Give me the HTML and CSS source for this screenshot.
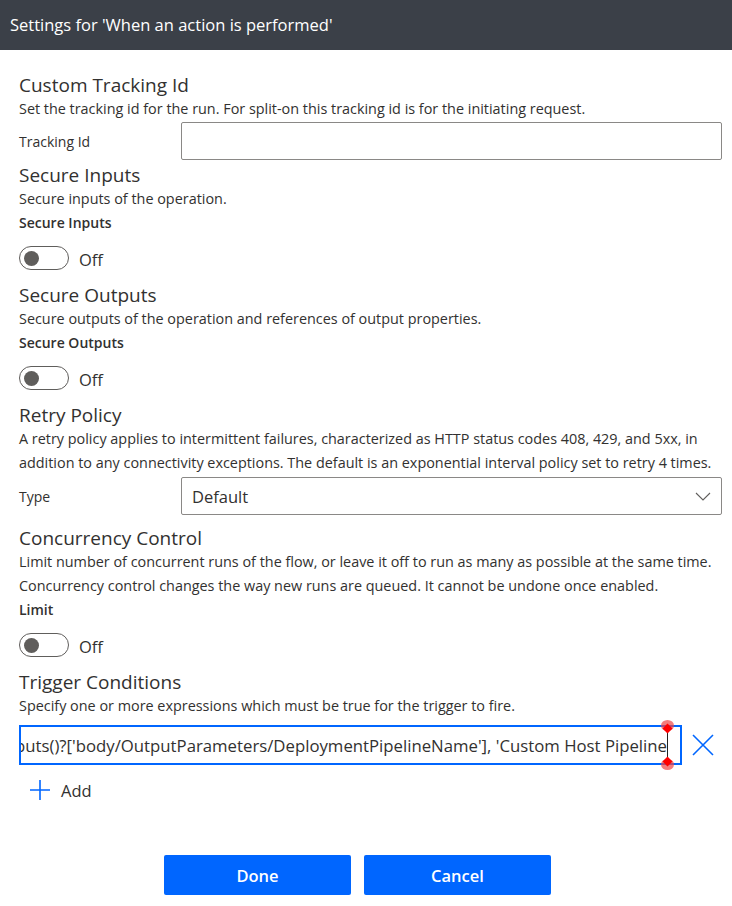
FILE: index.html
```html
<!DOCTYPE html>
<html lang="en">
<head>
  <meta charset="UTF-8">
  <meta name="viewport" content="width=device-width, initial-scale=1.0">
  <title>Settings</title>
  <link rel="stylesheet" href="styles.css">
</head>
<body>

  <div class="panel">

    <!-- Cabeçalho -->
    <div class="panel-header">Settings for 'When an action is performed'</div>

    <div class="panel-body">

      <div class="setting">
        <h2 class="setting-title">Custom Tracking Id</h2>
        <p class="setting-desc">Set the tracking id for the run. For split-on this tracking id is for the initiating request.</p>
        <div class="field-row field-row-tight">
          <label class="field-label" for="trackingId">Tracking Id</label>
          <input class="text-field" id="trackingId" type="text">
        </div>
      </div>

      <div class="setting">
        <h2 class="setting-title">Secure Inputs</h2>
        <p class="setting-desc">Secure inputs of the operation.</p>
        <div class="setting-label">Secure Inputs</div>
        <div class="toggle-row">
          <span class="toggle"><span class="toggle-knob"></span></span>
          <span class="toggle-text">Off</span>
        </div>
      </div>

      <div class="setting">
        <h2 class="setting-title">Secure Outputs</h2>
        <p class="setting-desc">Secure outputs of the operation and references of output properties.</p>
        <div class="setting-label">Secure Outputs</div>
        <div class="toggle-row">
          <span class="toggle"><span class="toggle-knob"></span></span>
          <span class="toggle-text">Off</span>
        </div>
      </div>

      <div class="setting">
        <h2 class="setting-title">Retry Policy</h2>
        <p class="setting-desc">A retry policy applies to intermittent failures, characterized as HTTP status codes 408, 429, and 5xx, in<br>addition to any connectivity exceptions. The default is an exponential interval policy set to retry 4 times.</p>
        <div class="field-row">
          <span class="field-label">Type</span>
          <div class="select-box">
            <span>Default</span>
            <svg width="16" height="9" viewBox="0 0 16 9"><path d="M1 1 L8 8 L15 1" fill="none" stroke="#605e5c" stroke-width="1.1"/></svg>
          </div>
        </div>
      </div>

      <div class="setting">
        <h2 class="setting-title">Concurrency Control</h2>
        <p class="setting-desc">Limit number of concurrent runs of the flow, or leave it off to run as many as possible at the same time.<br>Concurrency control changes the way new runs are queued. It cannot be undone once enabled.</p>
        <div class="setting-label">Limit</div>
        <div class="toggle-row">
          <span class="toggle"><span class="toggle-knob"></span></span>
          <span class="toggle-text">Off</span>
        </div>
      </div>

      <div class="setting">
        <h2 class="setting-title">Trigger Conditions</h2>
        <p class="setting-desc">Specify one or more expressions which must be true for the trigger to fire.</p>
        <div class="condition-row">
          <div class="condition-field">
            <div class="condition-clip">
              <span class="condition-text">@equals(triggerOutputs()?['body/OutputParameters/DeploymentPipelineName'], 'Custom Host Pipeline</span>
            </div>
            <span class="caret"></span>
            <span class="handle handle-top"></span>
            <span class="handle handle-bottom"></span>
          </div>
          <svg class="remove-icon" width="22" height="22" viewBox="0 0 22 22"><path d="M1 1 L21 21 M21 1 L1 21" stroke="#0066ff" stroke-width="1.6"/></svg>
        </div>
        <div class="add-row">
          <svg width="22" height="22" viewBox="0 0 22 22"><path d="M11 1 V21 M1 11 H21" stroke="#0066ff" stroke-width="1.6"/></svg>
          <span>Add</span>
        </div>
      </div>

    </div>

    <div class="panel-footer">
      <button class="btn">Done</button>
      <button class="btn">Cancel</button>
    </div>

  </div>

</body>
</html>
```

FILE: styles.css
```css
body {
  font-family: "Open Sans", Arial, sans-serif;
  background-color: #fff;
  color: #323130;
  margin: 0;
}
.panel {
  width: 732px;
}
.panel-header {
  height: 50px;
  background-color: #3b4048;
  color: #fff;
  font-size: 16.5px;
  line-height: 50px;
  padding-left: 10px;
}
.panel-body {
  padding: 23px 10px 0 19px;
}
.setting-title {
  margin: 0;
  font-size: 19px;
  font-weight: 400;
  line-height: 24px;
}
.setting-desc {
  margin: 0;
  font-size: 14.4px;
  line-height: 24px;
}
.setting-label {
  font-size: 14px;
  font-weight: 600;
  line-height: 24px;
}
/* Linha com rótulo e campo */
.field-row {
  display: flex;
  align-items: center;
  margin: 2px 0 11px;
}
.field-row-tight {
  margin: 1px 0 3px;
}
.field-label {
  width: 162px;
  font-size: 14px;
}
.text-field {
  flex: 1;
  height: 38px;
  box-sizing: border-box;
  border: 1px solid #8a8886;
  border-radius: 2px;
  margin: 0;
}
.select-box {
  flex: 1;
  height: 38px;
  box-sizing: border-box;
  border: 1px solid #8a8886;
  border-radius: 2px;
  display: flex;
  align-items: center;
  justify-content: space-between;
  padding: 0 10px 0 10px;
  font-size: 16.5px;
}
/* Interruptor */
.toggle-row {
  display: flex;
  align-items: center;
  height: 24px;
  margin: 11px 0 13px;
}
.toggle {
  width: 50px;
  height: 24px;
  box-sizing: border-box;
  border: 1px solid #605e5c;
  border-radius: 12px;
  display: flex;
  align-items: center;
  padding-left: 4px;
}
.toggle-knob {
  width: 15px;
  height: 15px;
  border-radius: 50%;
  background-color: #605e5c;
}
.toggle-text {
  margin-left: 10px;
  margin-top: 2px;
  font-size: 16.5px;
}
/* Condições */
.condition-row {
  display: flex;
  align-items: center;
  margin-top: 7px;
}
.condition-field {
  position: relative;
  width: 663px;
  height: 40px;
  box-sizing: border-box;
  border: 2px solid #0066ff;
  padding-right: 13px;
}
.condition-clip {
  height: 100%;
  overflow: hidden;
  display: flex;
  align-items: center;
  justify-content: flex-end;
}
.condition-text {
  flex-shrink: 0;
  white-space: nowrap;
  font-size: 16.75px;
}
.caret {
  position: absolute;
  right: 12px;
  top: 5px;
  width: 1px;
  height: 26px;
  background-color: #222;
}
.handle {
  position: absolute;
  right: 6px;
  width: 13px;
  height: 11px;
  border-radius: 50%;
  background-color: rgba(240, 70, 70, 0.7);
}
.handle::after {
  content: "";
  position: absolute;
  left: 3px;
  width: 7px;
  height: 7px;
  background-color: #f00;
  transform: rotate(45deg);
}
.handle-top {
  top: -7px;
}
.handle-top::after {
  top: 5px;
}
.handle-bottom {
  bottom: -7px;
}
.handle-bottom::after {
  top: -1px;
}
.remove-icon {
  margin-left: 10px;
}
.add-row {
  display: flex;
  align-items: center;
  height: 30px;
  margin-top: 10px;
  padding-left: 10px;
  font-size: 16.5px;
}
.add-row span {
  margin-left: 10px;
}
/* Rodapé */
.panel-footer {
  display: flex;
  justify-content: center;
  gap: 13px;
  margin-top: 50px;
  padding-right: 17px;
}
.btn {
  width: 187px;
  height: 40px;
  background-color: #0066ff;
  color: #fff;
  border: none;
  border-radius: 2px;
  font-family: "Open Sans", Arial, sans-serif;
  font-size: 16.5px;
  font-weight: 600;
}
```
